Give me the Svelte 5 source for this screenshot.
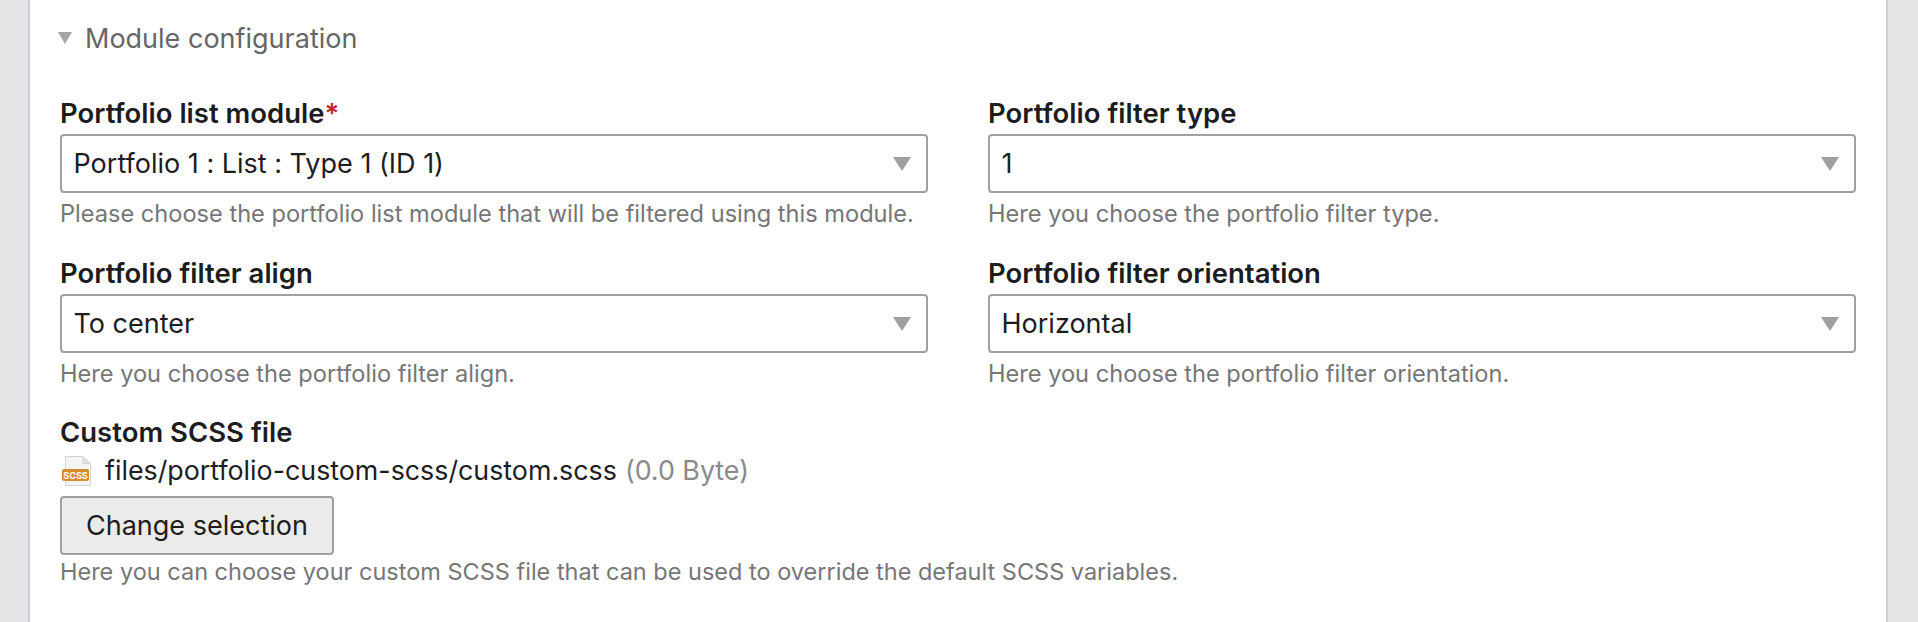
<script>
	const fields = [
		{ label: 'Portfolio list module', required: true, value: 'Portfolio 1 : List : Type 1 (ID 1)', help: 'Please choose the portfolio list module that will be filtered using this module.' },
		{ label: 'Portfolio filter type', value: '1', help: 'Here you choose the portfolio filter type.' },
		{ label: 'Portfolio filter align', value: 'To center', help: 'Here you choose the portfolio filter align.' },
		{ label: 'Portfolio filter orientation', value: 'Horizontal', help: 'Here you choose the portfolio filter orientation.' }
	];
</script>

<div class="page">
	<div class="panel">
		<div class="legend"><span class="caret"></span>Module configuration</div>

		<div class="grid">
			{#each fields as field}
				<div class="field">
					<div class="label">{field.label}{#if field.required}<span class="req">*</span>{/if}</div>
					<div class="select">
						<span>{field.value}</span>
						<i class="arrow"></i>
					</div>
					<div class="help">{field.help}</div>
				</div>
			{/each}
		</div>

		<div class="file-field">
			<div class="label">Custom SCSS file</div>
			<div class="file">
				<svg class="file-icon" width="32" height="32" viewBox="0 0 32 32">
					<path d="M5.5 2.5H23L30.5 9.5V31.5H5.5Z" fill="#f4f5f4" stroke="#d2d4d3" />
					<path d="M23 2.5V9.5H30.5" fill="#e2e4e3" stroke="#d2d4d3" />
					<rect x="2" y="15" width="27" height="12" rx="2" fill="#d98b2b" />
					<text x="15.5" y="24.5" text-anchor="middle">SCSS</text>
				</svg>
				<span>files/portfolio-custom-scss/custom.scss</span>
				<span class="size">(0.0 Byte)</span>
			</div>
			<button type="button">Change selection</button>
			<div class="help last">Here you can choose your custom SCSS file that can be used to override the default SCSS variables.</div>
		</div>
	</div>
</div>

<style>
	:global(body) {
		background: #e5e5e8;
	}

	.page {
		height: 622px;
		overflow: hidden;
		padding: 0 30px 0 28px;
		font-family: Inter, "Noto Sans", sans-serif;
		font-feature-settings: "calt" 0;
		color: #1d1d1f;
	}

	.panel {
		height: 100%;
		box-sizing: border-box;
		background: #fff;
		border-left: 2px solid #d0d0d3;
		border-right: 2px solid #d0d0d3;
		padding: 19px 30px 0;
	}

	.legend {
		display: flex;
		align-items: center;
		height: 38px;
		font-size: 27px;
		color: #666;
	}

	.caret {
		width: 0;
		height: 0;
		margin-left: -2px;
		margin-right: 13px;
		border-left: 7.5px solid transparent;
		border-right: 7.5px solid transparent;
		border-top: 12px solid #a6a6a6;
	}

	.grid {
		display: grid;
		grid-template-columns: 1fr 1fr;
		column-gap: 60px;
		row-gap: 23px;
		margin-top: 37px;
	}

	.label {
		font-size: 27.5px;
		font-weight: 600;
		line-height: 38px;
	}

	.req {
		color: #c4262e;
	}

	.select {
		position: relative;
		display: flex;
		align-items: center;
		height: 59px;
		box-sizing: border-box;
		margin-top: 2px;
		padding: 0 11.5px;
		border: 2px solid #a0a0a0;
		border-radius: 4px;
		font-size: 27px;
		background: #fff;
	}

	.arrow {
		position: absolute;
		right: 15px;
		top: 21px;
		width: 0;
		height: 0;
		border-left: 9px solid transparent;
		border-right: 9px solid transparent;
		border-top: 14px solid #a0a0a0;
	}

	.help {
		font-size: 23.6px;
		line-height: 34px;
		margin-top: 4px;
		color: #767676;
	}

	.help.last {
		margin-top: 0;
		font-size: 23.5px;
	}

	.file-field {
		margin-top: 22px;
	}

	.file {
		display: flex;
		align-items: center;
		height: 38px;
		font-size: 26.8px;
	}

	.file-icon {
		flex: none;
		margin-right: 13px;
	}

	.file-icon text {
		font-size: 9px;
		font-weight: 700;
		fill: #fff;
		font-family: Inter, sans-serif;
	}

	.size {
		margin-left: 8px;
		color: #8a8a8a;
	}

	button {
		display: block;
		height: 59px;
		margin-top: 7px;
		padding: 0 24px;
		background: #ebebeb;
		border: 2px solid #a0a0a0;
		border-radius: 4px;
		font: inherit;
		font-size: 27px;
		color: #1d1d1f;
	}
</style>
